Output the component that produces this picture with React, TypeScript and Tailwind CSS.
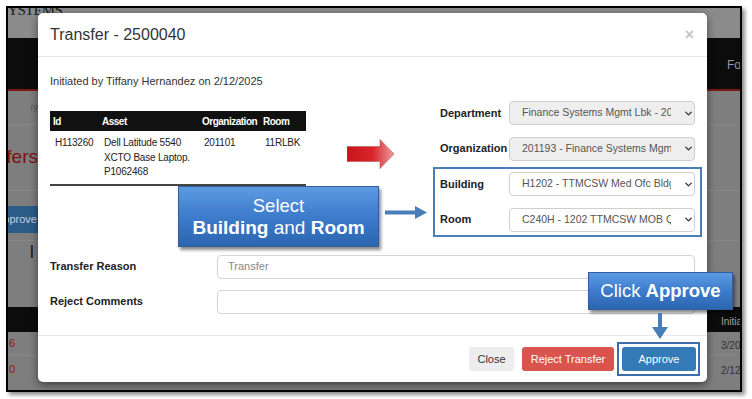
import { ChevronDown } from 'lucide-react';

const font = { fontFamily: '"Liberation Sans", Arial, sans-serif' };

const BgRow = ({
  h,
  left,
  right,
  className = '',
  leftClass = '',
}: {
  h: string;
  left?: React.ReactNode;
  right?: React.ReactNode;
  className?: string;
  leftClass?: string;
}) => (
  <div className={`flex w-full shrink-0 ${h} ${className}`}>
    <div className={`flex w-[30px] shrink-0 overflow-hidden whitespace-nowrap ${leftClass}`}>{left}</div>
    <div className="flex-1" />
    <div className="w-[20px] overflow-hidden whitespace-nowrap">{right}</div>
  </div>
);

const Select = ({ value, disabled }: { value: string; disabled?: boolean }) => (
  <div
    className={`flex h-[24px] w-[186px] items-center rounded-[4px] border border-[#cfcfcf] pl-[12px] text-[10.5px] text-[#555] ${
      disabled ? 'bg-[#eeeeee]' : 'bg-white'
    }`}
  >
    <span className="w-[150px] overflow-hidden whitespace-nowrap">{value}</span>
    <ChevronDown size={11} strokeWidth={3} className="ml-[12px] shrink-0 text-[#333]" />
  </div>
);

const FormRow = ({ label, children }: { label: string; children: React.ReactNode }) => (
  <div className="flex items-center">
    <div className="w-[69px] text-[11px] font-bold text-[#222] whitespace-nowrap">{label}</div>
    {children}
  </div>
);

export default function App() {
  return (
    <div className="relative h-[399px] w-[752px] overflow-hidden bg-white pl-[6px] pt-[6px]" style={font}>
      {/* Screenshot frame */}
      <div className="relative h-[386px] w-[736px] overflow-hidden border-2 border-black bg-[#7e7e7e] shadow-[3px_3px_4px_rgba(0,0,0,0.45)]">
        {/* Dimmed page behind the modal */}
        <div className="flex h-full w-full flex-col">
          <div className="h-[30px] shrink-0 overflow-hidden bg-[#8b8b8b]">
            <span
              className="-mt-[5px] -ml-[8px] block text-[15px] leading-[15px] tracking-[-0.8px] text-[#1a1a1a]"
              style={{ fontFamily: '"Liberation Serif", serif' }}
            >
              SYSTEMS
            </span>
          </div>
          <BgRow
            h="h-[53px]"
            className="items-center border-b-2 border-[#7a1818] bg-[#0c0c0c]"
            right={<span className="pl-[7px] text-[12px] text-[#9a9a9a]">Fo</span>}
          />
          <BgRow
            h="h-[34px]"
            leftClass="justify-end"
            className="items-center border-b border-[#888]"
            left={<span className="text-[9px] text-[#555]">ry</span>}
          />
          <BgRow
            h="h-[66px]"
            leftClass="justify-end"
            className="items-center border-b border-[#888]"
            left={<span className="text-[19px] text-[#7c1111]">fers</span>}
          />
          <div className="h-[15px] shrink-0" />
          <BgRow
            h="h-[27px]"
            leftClass="justify-end items-center bg-[#2b5b87]"
            left={<span className="pr-[1px] text-[11px] text-[#c2d2e2]">Approve</span>}
          />
          <BgRow h="h-[8px]" className="border-b border-[#888]" />
          <BgRow
            h="h-[66px]"
            leftClass="justify-end"
            className="items-start"
            left={<span className="pr-[4px] text-[19px] leading-[22px] text-[#1c1c1c]">l</span>}
          />
          <BgRow
            h="h-[25px]"
            className="items-center bg-[#0c0c0c]"
            right={<span className="pl-[1px] text-[10px] text-[#a0a0a0]">Initia</span>}
          />
          <BgRow
            h="h-[24px]"
            className="items-center border-b border-[#888]"
            left={<span className="pl-[1px] text-[11px] text-[#8a1b1b]">6</span>}
            right={<span className="pl-[1px] text-[10px] text-[#333]">3/20/</span>}
          />
          <BgRow
            h="h-[26px]"
            className="items-center"
            left={<span className="pl-[1px] text-[11px] text-[#8a1b1b]">0</span>}
            right={<span className="pl-[1px] text-[10px] text-[#333]">2/12/</span>}
          />
        </div>

        {/* Modal */}
        <div className="absolute left-[30px] top-[5px] flex h-[369px] w-[669px] flex-col rounded-[5px] bg-white shadow-[0_3px_9px_rgba(0,0,0,0.5)]">
          {/* Header */}
          <div className="flex h-[44px] shrink-0 items-center justify-between border-b border-[#e5e5e5] pl-[12px] pr-[13px]">
            <h2 className="text-[16px] text-[#333]">Transfer - 2500040</h2>
            <span className="text-[16px] font-bold text-[#c4c4c4]">×</span>
          </div>

          {/* Body */}
          <div className="flex flex-1 flex-col px-[12px] pt-[17px]">
            <div className="flex">
              <div className="w-[256px]">
                <p className="text-[11px] leading-[14px] text-[#333] whitespace-nowrap">
                  Initiated by Tiffany Hernandez on 2/12/2025
                </p>
                <div className="mt-[23px] text-[10px] tracking-[-0.2px]">
                  <div className="grid h-[20px] grid-cols-[49px_101px_61px_45px] items-center bg-[#111] font-bold tracking-[-0.5px] text-white">
                    <div className="pl-[3px]">Id</div>
                    <div className="pl-[3px]">Asset</div>
                    <div className="pl-[2px] whitespace-nowrap">Organization</div>
                    <div className="pl-[2px]">Room</div>
                  </div>
                  <div className="grid grid-cols-[49px_101px_61px_45px] border-b-2 border-[#444] pb-[4px] pt-[5px] leading-[14.5px] text-[#222]">
                    <div className="pl-[5px]">H113260</div>
                    <div className="pl-[5px]">
                      Dell Latitude 5540
                      <br />
                      XCTO Base Laptop.
                      <br />
                      P1062468
                    </div>
                    <div className="pl-[4px]">201101</div>
                    <div className="pl-[4px]">11RLBK</div>
                  </div>
                </div>
              </div>

              <div className="ml-auto mt-[27px] flex flex-col gap-[11.5px]">
                <FormRow label="Department">
                  <Select value="Finance Systems Mgmt Lbk - 201193" disabled />
                </FormRow>
                <FormRow label="Organization">
                  <Select value="201193 - Finance Systems Mgmt" disabled />
                </FormRow>
                <FormRow label="Building">
                  <Select value="H1202 - TTMCSW Med Ofc Bldg" />
                </FormRow>
                <FormRow label="Room">
                  <Select value="C240H - 1202 TTMCSW MOB Q" />
                </FormRow>
              </div>
            </div>

            <div className="mt-[23px] flex flex-col gap-[11px]">
              <div className="flex items-center">
                <div className="w-[167px] text-[11px] font-bold text-[#222]">Transfer Reason</div>
                <div className="flex h-[24px] flex-1 items-center rounded-[4px] border border-[#d4d4d4] pl-[10px] text-[11px] text-[#888]">
                  Transfer
                </div>
              </div>
              <div className="flex items-center">
                <div className="w-[167px] text-[11px] font-bold text-[#222]">Reject Comments</div>
                <div className="h-[24px] flex-1 rounded-[4px] border border-[#d4d4d4]" />
              </div>
            </div>
          </div>

          {/* Footer */}
          <div className="flex h-[47px] shrink-0 items-center justify-end gap-[8px] border-t border-[#e8e8e8] pr-[11px] text-[11px]">
            <button className="h-[24px] w-[45px] rounded-[3px] bg-[#ededed] text-[#333]">Close</button>
            <button className="h-[24px] w-[92px] rounded-[3px] bg-[#d9534f] text-white">Reject Transfer</button>
            <button className="h-[24px] w-[74px] rounded-[3px] bg-[#337ab7] text-white">Approve</button>
          </div>
        </div>
      </div>

      {/* Annotations */}
      <svg className="absolute left-[347px] top-[139px]" width="48" height="30" viewBox="0 0 48 30">
        <defs>
          <linearGradient id="redArrow" x1="0" x2="1" y1="0" y2="0">
            <stop offset="0" stopColor="#c8141a" />
            <stop offset="0.55" stopColor="#d8262a" />
            <stop offset="1" stopColor="#eba0a0" />
          </linearGradient>
        </defs>
        <path d="M0 7.5 H33 V0.5 L47 15 L33 29.5 V22.5 H0 Z" fill="url(#redArrow)" stroke="#b55" strokeWidth="0.6" />
      </svg>

      <div className="absolute left-[433px] top-[167px] h-[70px] w-[269px] border-2 border-[#4a7ebb]" />

      <div className="absolute left-[178px] top-[186px] flex h-[61px] w-[201px] flex-col items-center justify-center border border-[#2f5f9c] bg-linear-to-b from-[#5c9be2] via-[#3d7bcc] to-[#2c66b0] text-white shadow-[2px_3px_3px_rgba(0,0,0,0.45)]">
        <div className="text-[18.5px] leading-[21px]">Select</div>
        <div className="text-[19px] leading-[23px] whitespace-nowrap">
          <span className="font-bold">Building</span> and <span className="font-bold">Room</span>
        </div>
      </div>

      <svg className="absolute left-[385px] top-[206px]" width="42" height="13" viewBox="0 0 42 13">
        <path d="M0 4.5 H30 V0 L42 6.5 L30 13 V8.5 H0 Z" fill="#4a7ebb" />
      </svg>

      <div className="absolute left-[588px] top-[272px] flex h-[38px] w-[145px] items-center justify-center border border-[#2f5f9c] bg-linear-to-b from-[#5c9be2] via-[#3d7bcc] to-[#2c66b0] text-[18.5px] whitespace-nowrap text-white shadow-[2px_3px_3px_rgba(0,0,0,0.45)]">
        Click&nbsp;<span className="font-bold">Approve</span>
      </div>

      <svg className="absolute left-[652px] top-[313px]" width="16" height="26" viewBox="0 0 16 26">
        <path d="M6 0 H10 V14 H16 L8 26 L0 14 H6 Z" fill="#4a7ebb" />
      </svg>

      <div className="absolute left-[617px] top-[342px] h-[34px] w-[83px] border-2 border-[#3e6ea8]" />
    </div>
  );
}
